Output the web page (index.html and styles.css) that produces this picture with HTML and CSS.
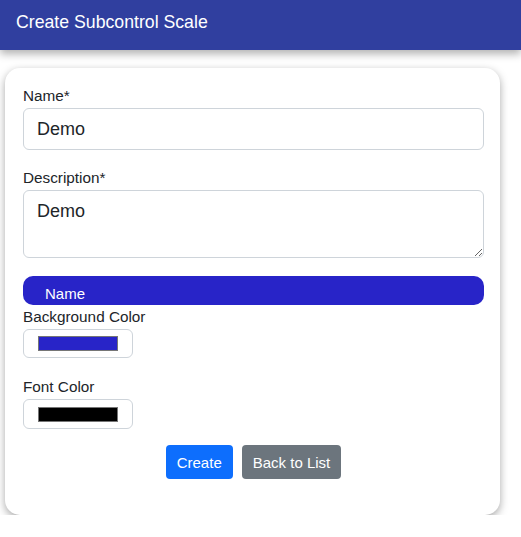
FILE: index.html
```html
<!DOCTYPE html>
<html>
<head>
<meta charset="utf-8">
<link rel="stylesheet" href="styles.css">
</head>
<body>
<header class="topbar">Create Subcontrol Scale</header>
<main class="card">
  <div class="field">
    <label class="lbl">Name*</label>
    <input class="ctrl" type="text" value="Demo">
  </div>
  <div class="field">
    <label class="lbl">Description*</label>
    <textarea class="ctrl area">Demo</textarea>
  </div>
  <div class="preview">Name</div>
  <div class="field color-field">
    <label class="lbl">Background Color</label>
    <div class="swatch-box"><span class="swatch bg"></span></div>
  </div>
  <div class="field color-field">
    <label class="lbl">Font Color</label>
    <div class="swatch-box last"><span class="swatch fg"></span></div>
  </div>
  <div class="actions">
    <button class="btn primary">Create</button>
    <button class="btn secondary">Back to List</button>
  </div>
</main>
</body>
</html>
```
FILE: styles.css
```css
* { box-sizing: border-box; }
body {
  margin: 0;
  font-family: "Liberation Sans", Arial, sans-serif;
  background: #fff;
  color: #212529;
}
.topbar {
  height: 50px;
  background: #303f9f;
  color: #fff;
  font-size: 17.7px;
  padding: 12px 16px;
  box-shadow: 0 4px 8px rgba(0,0,0,0.3);
  position: relative;
}
.card {
  margin: 18px 21px 0 5px;
  background: #fff;
  border-radius: 15px;
  box-shadow: 0 3px 8px rgba(0,0,0,0.35);
  padding: 19px 16px 36px 18px;
}
.field { display: flex; flex-direction: column; }
.lbl { font-size: 15.3px; line-height: 18px; margin-bottom: 3px; color: #212529; }
.ctrl {
  font-family: inherit;
  font-size: 18px;
  color: #212529;
  border: 1px solid #ced4da;
  border-radius: 6px;
  padding: 0 13px;
  height: 42px;
  margin-bottom: 19px;
  background: #fff;
}
.area { height: 68px; padding-top: 10px; resize: vertical; margin-bottom: 18px; }
.preview {
  background: #2824c8;
  color: #fff;
  font-size: 15px;
  border-radius: 10px;
  height: 29px;
  padding: 9px 22px 0;
  line-height: 18px;
  margin-bottom: 3px;
}
.swatch-box {
  width: 110px;
  height: 29px;
  border: 1px solid #ced4da;
  border-radius: 6px;
  display: flex;
  align-items: center;
  justify-content: center;
  margin-bottom: 20px;
}
.swatch-box.last { height: 30px; margin-bottom: 0; }
.swatch { width: 80px; height: 15px; border: 1px solid #767676; }
.swatch.bg { background: #2824c8; }
.swatch.fg { background: #000; }
.actions { display: flex; justify-content: center; gap: 9px; margin-top: 16px; }
.btn {
  font-family: inherit;
  font-size: 15px;
  color: #fff;
  border: none;
  border-radius: 4px;
  height: 34px;
  padding: 0 11px;
}
.primary { background: #0d6efd; }
.secondary { background: #6c757d; }
```
